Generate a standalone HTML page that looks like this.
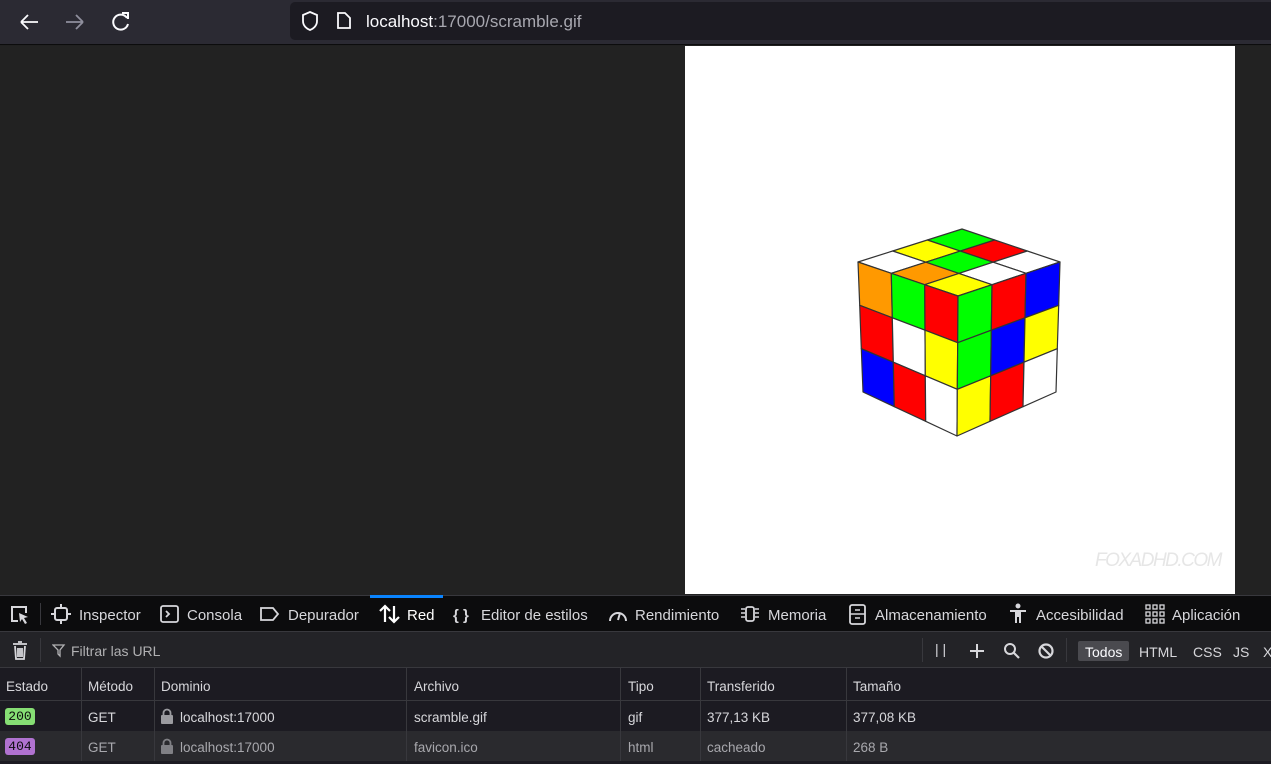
<!DOCTYPE html>
<html><head><meta charset="utf-8"><style>
*{margin:0;padding:0;box-sizing:border-box}
body{width:1271px;height:764px;overflow:hidden;background:#202020;font-family:"Liberation Sans",sans-serif;position:relative}
.abs{position:absolute}
#top{left:0;top:0;width:1271px;height:45px;background:#2b2a33;border-bottom:1px solid #0c0c0d}
#url{left:290px;top:2px;width:981px;height:38px;background:#1c1b22;border-radius:5px 0 0 5px}
#page{left:0;top:46px;width:1271px;height:549px;background:#222222}
#img{left:685px;top:46px;width:550px;height:548px;background:#fff}
#tabs{left:0;top:595px;width:1271px;height:36px;background:#0c0c0d;border-top:1px solid #38383d;color:#d7d7db;font-size:15px}
#tabs span{position:absolute;top:11px}
#filter{left:0;top:631px;width:1271px;height:37px;background:#232327;border-top:1px solid #38383d;border-bottom:1px solid #38383d;color:#b1b1b3;font-size:14px}
#hdr{left:0;top:668px;width:1271px;height:33px;background:#1c1b22;border-bottom:1px solid #38383d;color:#d7d7db;font-size:13.5px}
.row{left:0;width:1271px;height:30px;font-size:13.5px}
.c{position:absolute;top:9px}
#hdr .c{top:11px}
.vl{position:absolute;top:0;bottom:0;width:1px;background:#38383d}
</style></head><body>
<div id="top" class="abs">
<svg class="abs" style="left:18px;top:11px" width="24" height="22"><path d="M3 11H20M3 11L10 4M3 11L10 18" stroke="#fbfbfe" stroke-width="1.8" fill="none"/></svg>
<svg class="abs" style="left:63px;top:11px" width="24" height="22"><path d="M3 11H20M20 11L13 4M20 11L13 18" stroke="#8f8f9d" stroke-width="1.8" fill="none"/></svg>
<svg class="abs" style="left:109px;top:10px" width="24" height="24"><path d="M18 8A7.5 7.5 0 1 0 19 14" stroke="#fbfbfe" stroke-width="2" fill="none"/><path d="M13 3H19V9" stroke="#fbfbfe" stroke-width="2" fill="none"/></svg>
</div>
<div id="url" class="abs">
<svg class="abs" style="left:9px;top:8px" width="22" height="22"><path d="M11 2L18 5V11C18 16 14 19 11 20C8 19 4 16 4 11V5Z" stroke="#fbfbfe" stroke-width="1.8" fill="none"/></svg>
<svg class="abs" style="left:44px;top:8px" width="20" height="22"><path d="M4 3H11L16 8V18H4Z" stroke="#fbfbfe" stroke-width="1.8" fill="none"/></svg>
<span class="abs" style="left:76px;top:10px;font-size:17px;color:#fbfbfe">localhost<span style="color:#a8a8b0">:17000/scramble.gif</span></span>
</div>
<div id="page" class="abs"></div>
<div id="img" class="abs">
<svg id="cube" width="550" height="548"></svg>
<span class="abs" style="left:410px;top:504px;font-size:19px;font-style:italic;color:#e6e6e6;letter-spacing:-1.5px">FOXADHD.COM</span>
</div>
<div id="tabs" class="abs">
<div class="abs" style="left:370px;top:-1px;width:73px;height:3px;background:#0a84ff"></div>
<svg class="abs" style="left:9px;top:8px" width="22" height="22"><path d="M9 17H3V3H17V9" stroke="#d7d7db" stroke-width="2" fill="none"/><path d="M10 9L19 13L15 14L18 19L16 20L13 15L11 18Z" fill="#d7d7db"/></svg>
<div class="abs" style="left:40px;top:7px;width:1px;height:22px;background:#38383d"></div>
<svg class="abs" style="left:51px;top:8px" width="20" height="20"><rect x="4" y="4" width="12" height="12" rx="2" stroke="#d7d7db" stroke-width="2" fill="none"/><path d="M10 0V4M10 16V20M0 10H4M16 10H20" stroke="#d7d7db" stroke-width="2"/></svg>
<span style="left:79px">Inspector</span>
<svg class="abs" style="left:160px;top:8px" width="20" height="20"><rect x="1" y="2" width="17" height="16" rx="2" stroke="#d7d7db" stroke-width="1.8" fill="none"/><path d="M6 7L9 10L6 13" stroke="#d7d7db" stroke-width="1.8" fill="none"/></svg>
<span style="left:187px">Consola</span>
<svg class="abs" style="left:259px;top:9px" width="22" height="18"><path d="M2 3H14L19 9L14 15H2Z" stroke="#d7d7db" stroke-width="1.8" fill="none"/></svg>
<span style="left:288px">Depurador</span>
<svg class="abs" style="left:379px;top:7px" width="22" height="22"><path d="M6 19V3M1 8L6 3L11 8M15 3V19M10 14L15 19L20 14" stroke="#fff" stroke-width="2.2" fill="none"/></svg>
<span style="left:407px;color:#fff">Red</span>
<span style="left:453px;font-weight:bold">{ }</span>
<span style="left:481px">Editor de estilos</span>
<svg class="abs" style="left:607px;top:8px" width="22" height="20"><path d="M3 17A8 8 0 1 1 19 17" stroke="#d7d7db" stroke-width="2" fill="none"/><path d="M11 16L13 9" stroke="#d7d7db" stroke-width="2"/></svg>
<span style="left:635px">Rendimiento</span>
<svg class="abs" style="left:739px;top:8px" width="22" height="20"><rect x="7" y="3" width="8" height="14" rx="2" stroke="#d7d7db" stroke-width="1.8" fill="none"/><path d="M2 5H6M2 9H6M2 13H6M16 5H20M16 9H20M16 13H20" stroke="#d7d7db" stroke-width="1.5"/></svg>
<span style="left:768px">Memoria</span>
<svg class="abs" style="left:848px;top:8px" width="20" height="22"><rect x="2" y="1" width="15" height="19" rx="2" stroke="#d7d7db" stroke-width="1.8" fill="none"/><path d="M2 10H17M7 6H12M7 14H12" stroke="#d7d7db" stroke-width="1.5"/></svg>
<span style="left:875px">Almacenamiento</span>
<svg class="abs" style="left:1008px;top:7px" width="20" height="22"><circle cx="10" cy="3" r="2.5" fill="#d7d7db"/><path d="M2 7H18V9H13V20H11V14H9V20H7V9H2Z" fill="#d7d7db"/></svg>
<span style="left:1036px">Accesibilidad</span>
<svg class="abs" style="left:1145px;top:8px" width="20" height="20"><g fill="none" stroke="#d7d7db" stroke-width="1.3"><rect x="1" y="1" width="4" height="4"/><rect x="8" y="1" width="4" height="4"/><rect x="15" y="1" width="4" height="4"/><rect x="1" y="8" width="4" height="4"/><rect x="8" y="8" width="4" height="4"/><rect x="15" y="8" width="4" height="4"/><rect x="1" y="15" width="4" height="4"/><rect x="8" y="15" width="4" height="4"/><rect x="15" y="15" width="4" height="4"/></g></svg>
<span style="left:1172px">Aplicación</span>
</div>
<div id="filter" class="abs">
<svg class="abs" style="left:10px;top:8px" width="20" height="22"><path d="M3 4H17M8 2H12M5 6L6 19H14L15 6M8 8V17M10 8V17M12 8V17" stroke="#d7d7db" stroke-width="1.8" fill="none"/></svg>
<div class="abs" style="left:40px;top:6px;width:1px;height:24px;background:#38383d"></div>
<svg class="abs" style="left:52px;top:12px" width="14" height="14"><path d="M1 1H12L8 6V12L6 10V6Z" stroke="#b1b1b3" stroke-width="1.3" fill="none"/></svg>
<span class="abs" style="left:71px;top:11px;font-size:14px">Filtrar las URL</span>
<div class="abs" style="left:922px;top:6px;width:1px;height:24px;background:#38383d"></div>
<span class="abs" style="left:935px;top:9px;color:#d7d7db">| |</span>
<svg class="abs" style="left:968px;top:10px" width="18" height="18"><path d="M9 2V16M2 9H16" stroke="#d7d7db" stroke-width="2"/></svg>
<svg class="abs" style="left:1003px;top:10px" width="18" height="18"><circle cx="7" cy="7" r="5" stroke="#d7d7db" stroke-width="2" fill="none"/><path d="M11 11L16 16" stroke="#d7d7db" stroke-width="2.2"/></svg>
<svg class="abs" style="left:1037px;top:10px" width="18" height="18"><circle cx="9" cy="9" r="6.5" stroke="#d7d7db" stroke-width="2.2" fill="none"/><path d="M5 5L13 13" stroke="#d7d7db" stroke-width="2.2"/></svg>
<div class="abs" style="left:1066px;top:6px;width:1px;height:24px;background:#38383d"></div>
<div class="abs" style="left:1078px;top:9px;width:51px;height:20px;background:#4a4a4f;border-radius:2px"></div>
<span class="abs" style="left:1085px;top:12px;color:#fbfbfe">Todos</span>
<span class="abs" style="left:1139px;top:12px;color:#d7d7db">HTML</span>
<span class="abs" style="left:1193px;top:12px;color:#d7d7db">CSS</span>
<span class="abs" style="left:1233px;top:12px;color:#d7d7db">JS</span>
<span class="abs" style="left:1263px;top:12px;color:#d7d7db">X</span>
</div>
<div id="hdr" class="abs">
<span class="c" style="left:6px">Estado</span><div class="vl" style="left:81px"></div>
<span class="c" style="left:88px">Método</span><div class="vl" style="left:154px"></div>
<span class="c" style="left:161px">Dominio</span><div class="vl" style="left:406px"></div>
<span class="c" style="left:414px">Archivo</span><div class="vl" style="left:620px"></div>
<span class="c" style="left:628px">Tipo</span><div class="vl" style="left:700px"></div>
<span class="c" style="left:707px">Transferido</span><div class="vl" style="left:846px"></div>
<span class="c" style="left:853px">Tamaño</span>
</div>
<div class="abs row" style="top:701px;background:#1c1b22;color:#d7d7db">
<span class="abs" style="left:5px;top:7px;width:30px;height:17px;background:#86de74;border-radius:3px;color:#0c0c0d;font-family:'Liberation Mono',monospace;font-size:13px;text-align:center;line-height:17px">200</span>
<div class="vl" style="left:81px"></div><span class="c" style="left:88px">GET</span><div class="vl" style="left:154px"></div>
<svg class="abs" style="left:160px;top:7px" width="14" height="16"><path d="M3.5 7V5A3.5 3.5 0 0 1 10.5 5V7" stroke="#9b9ba0" stroke-width="1.8" fill="none"/><rect x="1" y="7" width="12" height="9" rx="1" fill="#9b9ba0"/></svg>
<span class="c" style="left:180px">localhost:17000</span><div class="vl" style="left:406px"></div>
<span class="c" style="left:414px">scramble.gif</span><div class="vl" style="left:620px"></div>
<span class="c" style="left:628px">gif</span><div class="vl" style="left:700px"></div>
<span class="c" style="left:707px">377,13 KB</span><div class="vl" style="left:846px"></div>
<span class="c" style="left:853px">377,08 KB</span>
</div>
<div class="abs row" style="top:731px;background:#2a2a2e;color:#a8a8ad">
<span class="abs" style="left:5px;top:7px;width:30px;height:17px;background:#b072d0;border-radius:3px;color:#0c0c0d;font-family:'Liberation Mono',monospace;font-size:13px;text-align:center;line-height:17px">404</span>
<div class="vl" style="left:81px"></div><span class="c" style="left:88px">GET</span><div class="vl" style="left:154px"></div>
<svg class="abs" style="left:160px;top:7px" width="14" height="16"><path d="M3.5 7V5A3.5 3.5 0 0 1 10.5 5V7" stroke="#808085" stroke-width="1.8" fill="none"/><rect x="1" y="7" width="12" height="9" rx="1" fill="#808085"/></svg>
<span class="c" style="left:180px">localhost:17000</span><div class="vl" style="left:406px"></div>
<span class="c" style="left:414px">favicon.ico</span><div class="vl" style="left:620px"></div>
<span class="c" style="left:628px">html</span><div class="vl" style="left:700px"></div>
<span class="c" style="left:707px">cacheado</span><div class="vl" style="left:846px"></div>
<span class="c" style="left:853px">268 B</span>
</div>
<div class="abs" style="left:0;top:761px;width:1271px;height:3px;background:#1c1b22"></div>
<script>
var C={r:'#ff0000',g:'#00ff00',b:'#0000ff',y:'#ffff00',o:'#ff9900',w:'#ffffff'};
var ox=685,oy=46;
function P(x,y){return [x-ox,y-oy];}
function face(p00,p10,p11,p01,grid){
 var s='';
 function pt(u,v){var x=(1-u)*(1-v)*p00[0]+u*(1-v)*p10[0]+u*v*p11[0]+(1-u)*v*p01[0];
  var y=(1-u)*(1-v)*p00[1]+u*(1-v)*p10[1]+u*v*p11[1]+(1-u)*v*p01[1];return x.toFixed(1)+','+y.toFixed(1);}
 for(var r=0;r<3;r++)for(var c=0;c<3;c++){
  var pts=[pt(c/3,r/3),pt((c+1)/3,r/3),pt((c+1)/3,(r+1)/3),pt(c/3,(r+1)/3)].join(' ');
  s+='<polygon points="'+pts+'" fill="'+C[grid[r][c]]+'" stroke="#333" stroke-width="1.2" stroke-linejoin="round"/>';
 }
 return s;
}
var L=P(858,262),B=P(962,229),R=P(1060,262),F=P(958,296),LB=P(863,392),D=P(957,436),RB=P(1056,392);
var s='';
s+=face(B,R,F,L,[['g','r','w'],['y','g','w'],['w','o','y']]);
s+=face(L,F,D,LB,[['o','g','r'],['r','w','y'],['b','r','w']]);
s+=face(F,R,RB,D,[['g','r','b'],['g','b','y'],['y','r','w']]);
document.getElementById('cube').innerHTML=s;
</script>
</body></html>
